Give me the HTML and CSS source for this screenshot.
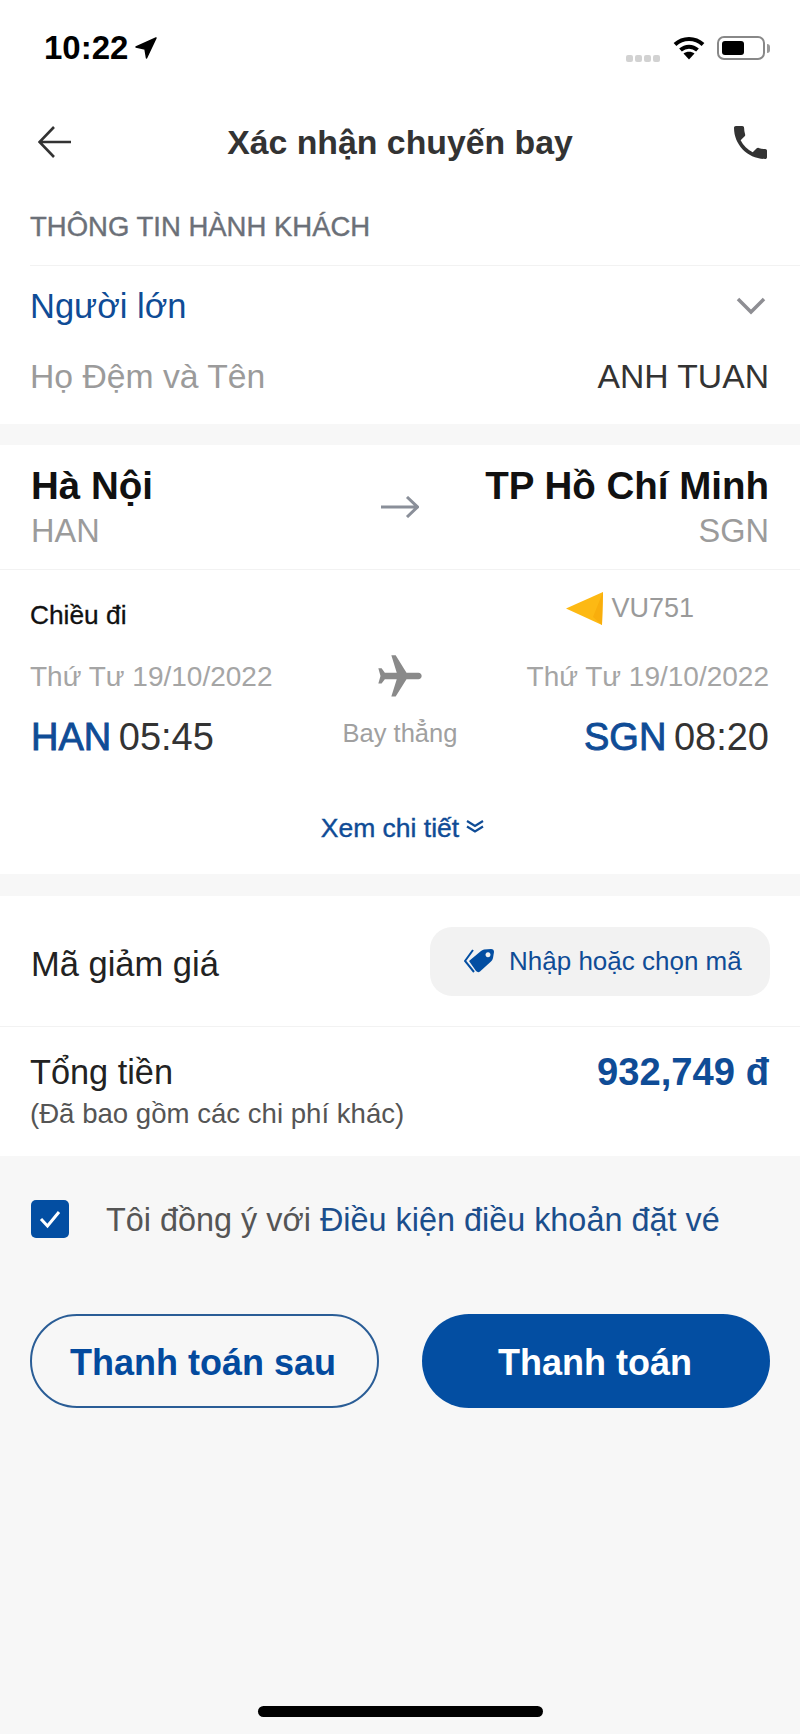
FILE: index.html

```html
<!DOCTYPE html>
<html lang="vi">
<head>
  <meta charset="UTF-8">
  <meta name="viewport" content="width=device-width, initial-scale=1.0">
  <title>Xác nhận chuyến bay</title>
  <link rel="stylesheet" href="styles.css">
</head>
<body>
  <div class="screen">
    <section class="card card-passenger">
      <div class="status-bar">
        <div class="status-time">
          <span>10:22</span>
          <svg class="icon-location" viewBox="0 0 22 22"><path d="M21 1 1 10l9 2 1.500 9z" fill="#000" stroke="#000" stroke-width="1.500" stroke-linejoin="round"/></svg>
        </div>
        <div class="status-icons">
          <div class="signal"><i></i><i></i><i></i><i></i></div>
          <svg class="icon-wifi" viewBox="0 0 32 24"><path d="M2 8.500c8-7.500 20-7.500 28 0M7.500 14c5-4.500 12-4.500 17 0" fill="none" stroke="#000" stroke-width="4"/><path d="M10.500 17.500c3-2.500 8-2.500 11 0L16 23.500z" fill="#000"/></svg>
          <div class="battery"><div class="battery-fill"></div></div>
          <div class="battery-nub"></div>
        </div>
      </div>

      <header class="nav-bar">
        <svg class="icon-back" viewBox="0 0 34 32"><path d="M33 16H2M16 1 1.500 16 16 31" fill="none" stroke="#333" stroke-width="2.600"/></svg>
        <h1 class="nav-title">Xác nhận chuyến bay</h1>
        <svg class="icon-phone" viewBox="3 3 18 18" preserveAspectRatio="none"><path d="M6.620 10.790c1.440 2.830 3.760 5.140 6.590 6.590l2.200-2.200c.27-.27.67-.36 1.020-.24 1.120.37 2.330.57 3.570.57.55 0 1 .45 1 1V20c0 .55-.45 1-1 1-9.390 0-17-7.610-17-17 0-.55.45-1 1-1h3.500c.55 0 1 .45 1 1 0 1.250.2 2.450.57 3.570.11.35.03.74-.25 1.020l-2.200 2.200z" fill="#333"/></svg>
      </header>

      <h2 class="section-title">THÔNG TIN HÀNH KHÁCH</h2>

      <div class="passenger-type">
        <span>Người lớn</span>
        <svg class="icon-chevron" viewBox="0 0 30 18"><path d="M2 2l13 13L28 2" fill="none" stroke="#8e8e93" stroke-width="3.500"/></svg>
      </div>
      <div class="passenger-name">
        <span class="label-muted">Họ Đệm và Tên</span>
        <span class="name-value">ANH TUAN</span>
      </div>
    </section>

    <section class="card card-flight">
      <div class="route">
        <div>
          <div class="city">Hà Nội</div>
          <div class="code">HAN</div>
        </div>
        <svg class="icon-arrow" viewBox="0 0 38 22"><path d="M0 11h36M26 1l10.500 10L26 21" fill="none" stroke="#8a8f99" stroke-width="3"/></svg>
        <div class="align-right">
          <div class="city">TP Hồ Chí Minh</div>
          <div class="code">SGN</div>
        </div>
      </div>

      <div class="trip">
        <div class="trip-head">
          <span class="trip-label">Chiều đi</span>
          <div class="airline">
            <svg class="logo-vietravel" viewBox="0 0 38 33"><path d="M0 16.500 37 0l-1 33z" fill="#fdb913"/><path d="M37 0 27 25l9 8z" fill="#f9ae0c"/></svg>
            <span>VU751</span>
          </div>
        </div>
        <div class="trip-grid">
          <div class="date">Thứ Tư 19/10/2022</div>
          <svg class="icon-plane" viewBox="0 0 24 24"><path transform="rotate(90 12 12)" d="M21 16v-2l-8-5V3.500c0-.83-.67-1.500-1.500-1.500S10 2.670 10 3.500V9l-8 5v2l8-2.500V19l-2 1.500V22l3.500-1 3.500 1v-1.500L13 19v-5.500l8 2.500z" fill="#8a8a8a"/></svg>
          <div class="date align-right">Thứ Tư 19/10/2022</div>
          <div class="time"><b>HAN</b> 05:45</div>
          <div class="stops">Bay thẳng</div>
          <div class="time align-right"><b>SGN</b> 08:20</div>
        </div>
        <div class="details-link">
          <span>Xem chi tiết</span>
          <svg class="icon-double" viewBox="0 0 18 13"><path d="M1 1l8 5 8-5M1 6.500l8 5 8-5" fill="none" stroke="#0f4c96" stroke-width="2.200"/></svg>
        </div>
      </div>
    </section>

    <section class="card card-price">
      <div class="voucher">
        <span class="voucher-label">Mã giảm giá</span>
        <div class="voucher-btn">
          <svg class="icon-tag" viewBox="0 0 32 26"><path d="M9 2 1 13l9 11" fill="none" stroke="#034ea2" stroke-width="2"/><path fill-rule="evenodd" d="M5 13 17 3q1-1 3-1.500L27 1q3 0 3 3l-1 6q-.5 2-2 3.500L16 23.500q-2 1.500-4-.5zM24 4.200a2.500 2.500 0 1 0 .01 0z" fill="#034ea2"/></svg>
          <span>Nhập hoặc chọn mã</span>
        </div>
      </div>
      <div class="total">
        <div>
          <div class="total-label">Tổng tiền</div>
          <div class="total-note">(Đã bao gồm các chi phí khác)</div>
        </div>
        <div class="total-value">932,749 đ</div>
      </div>
    </section>

    <div class="agree">
      <div class="checkbox">
        <svg viewBox="0 0 24 20"><path d="M3 10l6.500 7L21 3" fill="none" stroke="#fff" stroke-width="3"/></svg>
      </div>
      <p class="agree-text">Tôi đồng ý với <a>Điều kiện điều khoản đặt vé</a></p>
    </div>

    <div class="actions">
      <button class="btn btn-outline">Thanh toán sau</button>
      <button class="btn btn-primary">Thanh toán</button>
    </div>

    <div class="home-bar"></div>
  </div>
</body>
</html>
```

FILE: styles.css

```css
* {
  box-sizing: border-box;
}
body {
  margin: 0;
  font-family: "Liberation Sans", Arial, sans-serif;
  color: #222;
}
h1, h2, p {
  margin: 0;
  font-weight: normal;
}
svg {
  display: block;
  flex: none;
}
.screen {
  width: 800px;
  height: 1734px;
  background: #f7f7f7;
  display: flex;
  flex-direction: column;
}
.card {
  background: #fff;
}
.align-right {
  text-align: right;
}

/* status bar */
.status-bar {
  height: 96px;
  padding: 0 30px 0 44px;
  display: flex;
  justify-content: space-between;
  align-items: center;
}
.status-time {
  display: flex;
  align-items: center;
  gap: 7px;
  font-size: 33px;
  font-weight: bold;
  color: #000;
}
.icon-location {
  width: 22px;
  height: 22px;
}
.status-icons {
  display: flex;
  align-items: center;
}
.signal {
  display: flex;
  gap: 2px;
  margin: 21px 13px 0 0;
}
.signal i {
  width: 7px;
  height: 7px;
  border-radius: 2px;
  background: #d2d2d2;
}
.icon-wifi {
  width: 32px;
  height: 24px;
  margin-right: 12px;
}
.battery {
  width: 48px;
  height: 24px;
  border: 2px solid #888;
  border-radius: 7px;
  padding: 3px;
}
.battery-fill {
  width: 22px;
  height: 100%;
  background: #000;
  border-radius: 3px;
}
.battery-nub {
  width: 3px;
  height: 9px;
  margin-left: 2px;
  background: #999;
  border-radius: 0 3px 3px 0;
}

/* nav */
.nav-bar {
  height: 92px;
  padding: 0 33px 0 38px;
  display: flex;
  justify-content: space-between;
  align-items: center;
}
.icon-back {
  width: 34px;
  height: 32px;
}
.nav-title {
  margin-right: 6px;
  font-size: 33.800px;
  font-weight: bold;
  color: #333;
}
.icon-phone {
  width: 33px;
  height: 33px;
}

/* passenger */
.section-title {
  margin-left: 30px;
  height: 78px;
  border-bottom: 1px solid #f2f2f2;
  font-size: 27.500px;
  line-height: 78px;
  color: #6b7078;
  -webkit-text-stroke: 0.4px #6b7078;
}
.passenger-type {
  height: 75px;
  padding: 5px 34px 0 30px;
  display: flex;
  justify-content: space-between;
  align-items: center;
  font-size: 34.500px;
  color: #0f4c96;
}
.icon-chevron {
  width: 30px;
  height: 18px;
}
.passenger-name {
  height: 83px;
  padding: 6px 31px 18px 30px;
  display: flex;
  justify-content: space-between;
  align-items: center;
  font-size: 33.700px;
}
.label-muted {
  color: #9b9b9b;
}
.name-value {
  color: #333;
}

/* flight */
.card-flight {
  margin-top: 21px;
}
.route {
  padding: 19px 31px 19px 31px;
  display: grid;
  grid-template-columns: 1fr auto 1fr;
  align-items: center;
  border-bottom: 1px solid #f2f2f2;
}
.city {
  font-size: 38.500px;
  line-height: 44px;
  font-weight: bold;
  color: #111;
}
.code {
  margin-top: 4px;
  font-size: 32.500px;
  line-height: 38px;
  color: #9b9b9b;
}
.icon-arrow {
  width: 38px;
  height: 22px;
}
.trip {
  padding: 0 31px 0 31px;
}
.trip-head {
  height: 77px;
  padding-top: 13px;
  display: flex;
  justify-content: space-between;
  align-items: center;
}
.trip-label {
  margin-left: -1px;
  font-size: 26.300px;
  color: #111;
  -webkit-text-stroke: 0.3px #111;
}
.airline {
  display: flex;
  align-items: center;
  gap: 7px;
  margin: 0 75px 14px 0;
  font-size: 27px;
  color: #9a9a9a;
}
.logo-vietravel {
  width: 38px;
  height: 33px;
}
.trip-grid {
  display: grid;
  grid-template-columns: 1fr auto 1fr;
  grid-template-rows: 60px 60px;
  align-items: center;
  justify-items: center;
}
.trip-grid > div {
  justify-self: stretch;
}
.trip-grid .stops {
  text-align: center;
  justify-self: center;
}
.date {
  margin-left: -1px;
  font-size: 28px;
  color: #a5a5a5;
}
.icon-plane {
  width: 52px;
  height: 52px;
}
.time {
  font-size: 38px;
  word-spacing: -3px;
  color: #333;
}
.time b {
  font-weight: normal;
  color: #0f4c96;
  -webkit-text-stroke: 0.9px #0f4c96;
}
.stops {
  font-size: 25.500px;
  color: #a0a0a0;
  margin-bottom: 8px;
}
.details-link {
  height: 107px;
  padding: 16px 0 0 5px;
  display: flex;
  justify-content: center;
  align-items: center;
  gap: 7px;
  font-size: 26.500px;
  color: #0f4c96;
  -webkit-text-stroke: 0.4px #0f4c96;
}
.icon-double {
  width: 18px;
  height: 13px;
  margin-top: -4px;
}

/* voucher and total */
.card-price {
  margin-top: 22px;
}
.voucher {
  height: 131px;
  padding: 0 30px 0 31px;
  display: flex;
  justify-content: space-between;
  align-items: center;
  border-bottom: 1px solid #f2f2f2;
}
.voucher-label {
  margin-top: 6px;
  font-size: 34.500px;
  color: #222;
}
.voucher-btn {
  width: 340px;
  height: 69px;
  padding-left: 34px;
  display: flex;
  align-items: center;
  gap: 13px;
  border-radius: 22px;
  background: #f2f2f2;
  font-size: 26px;
  color: #0f4c96;
}
.icon-tag {
  width: 32px;
  height: 26px;
}
.total {
  height: 129px;
  padding: 23px 31px 0 30px;
  display: flex;
  justify-content: space-between;
  align-items: flex-start;
}
.total-label {
  font-size: 34.300px;
  line-height: 44px;
}
.total-note {
  margin-top: 2px;
  font-size: 27.600px;
  line-height: 36px;
  color: #555;
}
.total-value {
  margin-top: 1px;
  font-size: 38.200px;
  line-height: 42px;
  font-weight: bold;
  color: #0f4c96;
}

/* agree and buttons */
.agree {
  margin-top: 44px;
  padding-left: 31px;
  display: flex;
  align-items: flex-start;
  gap: 37px;
}
.checkbox {
  width: 38px;
  height: 38px;
  border-radius: 5px;
  background: #034ea2;
  display: flex;
  align-items: center;
  justify-content: center;
}
.checkbox svg {
  width: 24px;
  height: 20px;
}
.agree-text {
  padding-top: 2px;
  font-size: 32.400px;
  color: #555;
}
.agree-text a {
  color: #1b4e8c;
}
.actions {
  margin-top: 75px;
  padding: 0 30px;
  display: flex;
  justify-content: space-between;
}
.btn {
  width: 348px;
  height: 94px;
  padding: 3px 0 0;
  border-radius: 47px;
  font-family: inherit;
  font-size: 36px;
  font-weight: bold;
}
.btn-outline {
  width: 349px;
  padding-right: 3px;
  background: transparent;
  border: 2.500px solid #2a5d96;
  color: #034a9e;
}
.btn-primary {
  padding-right: 2px;
  background: #034ea2;
  border: 0;
  color: #fff;
}
.home-bar {
  width: 285px;
  height: 11px;
  margin: auto auto 17px;
  border-radius: 6px;
  background: #000;
}
```
